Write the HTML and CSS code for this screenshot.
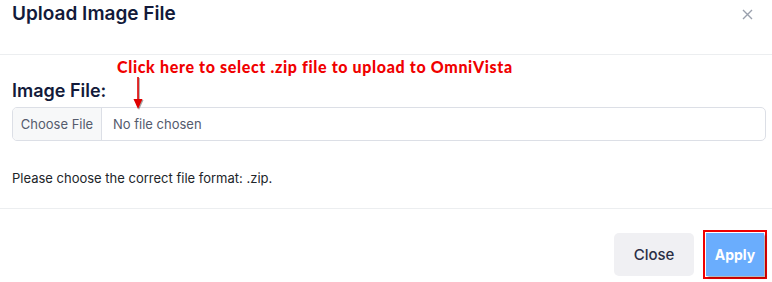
FILE: index.html
```html
<!DOCTYPE html>
<html>
<head>
<meta charset="utf-8">
<link rel="stylesheet" href="styles.css">
</head>
<body>
<div class="modal">
  <div class="modal-header">
    <h5 class="modal-title">Upload Image File</h5>
    <button class="btn-close" aria-label="Close">
      <svg width="11" height="11" viewBox="0 0 11 11"><path d="M1 1 L10 10 M10 1 L1 10" stroke="#9aa0ad" stroke-width="1.4" fill="none"/></svg>
    </button>
  </div>
  <div class="modal-body">
    <div class="annotation">
      <span class="annotation-text">Click here to select .zip file to upload to OmniVista</span>
      <svg class="annotation-arrow" width="12" height="34" viewBox="0 0 12 34">
        <line x1="6" y1="0" x2="6" y2="24" stroke="#e00000" stroke-width="1.6"/>
        <path d="M1.5 22 L10.5 22 L6 32 Z" fill="#e00000"/>
      </svg>
    </div>
    <label class="form-label">Image File:</label>
    <div class="file-input">
      <span class="file-btn">Choose File</span>
      <span class="file-name">No file chosen</span>
    </div>
    <p class="help-text">Please choose the correct file format: .zip.</p>
  </div>
  <div class="modal-footer">
    <button class="btn btn-secondary">Close</button>
    <span class="highlight"><button class="btn btn-primary">Apply</button></span>
  </div>
</div>
</body>
</html>
```
FILE: styles.css
```css
* { box-sizing: border-box; }
body {
  margin: 0;
  background: #fff;
  font-family: Inter, "Noto Sans", sans-serif;
  color: #212529;
}
.modal {
  width: 772px;
  height: 282px;
  overflow: hidden;
}
.modal-header {
  height: 55px;
  border-bottom: 1px solid #eceef0;
  display: flex;
  align-items: flex-start;
  justify-content: space-between;
  padding: 0 12px;
}
.modal-title {
  margin: 0;
  padding-top: 1px;
  font-size: 19px;
  font-weight: 600;
  color: #121a3a;
  line-height: 26px;
}
.btn-close {
  border: 0;
  background: transparent;
  padding: 0;
  margin-top: 9px;
  margin-right: 7px;
  width: 11px;
  height: 11px;
  display: flex;
}
.modal-body {
  position: relative;
  padding: 25px 6px 0 12px;
  height: 154px;
  border-bottom: 1px solid #eceef0;
}
.annotation {
  position: absolute;
  left: 117px;
  top: 3px;
}
.annotation-text {
  font-family: "Lato", sans-serif;
  font-weight: 900;
  font-size: 16px;
  color: #f00000;
  letter-spacing: 0.65px;
  white-space: nowrap;
  display: block;
  line-height: 18px;
}
.annotation-arrow {
  position: absolute;
  left: 15px;
  top: 19px;
  filter: drop-shadow(1px 1px 0.6px rgba(0,0,0,0.35));
}
.form-label {
  display: block;
  font-size: 18px;
  font-weight: 600;
  color: #121a3a;
  line-height: 22px;
  margin-bottom: 5px;
}
.file-input {
  display: flex;
  height: 34px;
  border: 1px solid #dcdfe6;
  border-radius: 5px;
  overflow: hidden;
  font-size: 13px;
  color: #545b6d;
}
.file-btn {
  width: 89px;
  background: #f7f8f9;
  border-right: 1px solid #dcdfe6;
  display: flex;
  align-items: center;
  justify-content: center;
}
.file-name {
  display: flex;
  align-items: center;
  padding-left: 11px;
}
.help-text {
  margin: 28px 0 0;
  font-size: 13px;
  color: #212529;
  line-height: 18px;
}
.modal-footer {
  display: flex;
  justify-content: flex-end;
  align-items: center;
  gap: 9px;
  padding: 21px 5px 0 0;
}
.btn {
  border: 0;
  font-family: Inter, sans-serif;
  font-size: 15px;
  border-radius: 5px;
  height: 43px;
}
.btn-secondary {
  width: 80px;
  background: #f0f0f3;
  color: #2a2f45;
  font-weight: 500;
}
.highlight {
  display: flex;
  border: 2px solid #f00000;
  padding: 1px;
}
.btn-primary {
  width: 58px;
  background: #6aadfd;
  color: #fff;
  font-weight: 700;
  font-size: 14px;
  border-radius: 0;
  box-shadow: 2px 2px 2px rgba(0,0,0,0.3);
}
```
